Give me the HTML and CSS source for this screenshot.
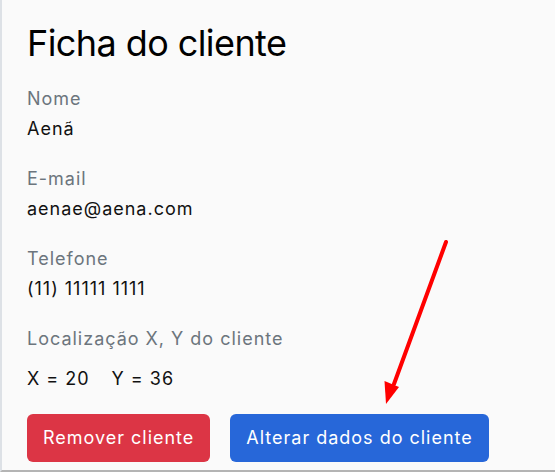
FILE: index.html
```html
<!DOCTYPE html>
<html lang="pt">
<head>
<meta charset="utf-8">
<title>Ficha do cliente</title>
<link rel="stylesheet" href="styles.css">
</head>
<body>
<main class="page">
  <h2 class="title">Ficha do cliente</h2>
  <div class="field">
    <div class="label">Nome</div>
    <div class="value">Aenã</div>
  </div>
  <div class="field">
    <div class="label">E-mail</div>
    <div class="value">aenae@aena.com</div>
  </div>
  <div class="field">
    <div class="label">Telefone</div>
    <div class="value">(11) 11111 1111</div>
  </div>
  <div class="field">
    <div class="label">Localização X, Y do cliente</div>
    <div class="value coords"><span>X = 20</span><span>Y = 36</span></div>
  </div>
  <div class="actions">
    <button class="btn btn-danger">Remover cliente</button>
    <button class="btn btn-primary">Alterar dados do cliente</button>
  </div>
  <svg class="arrow" width="555" height="472" viewBox="0 0 555 472" aria-hidden="true">
    <line x1="446" y1="242" x2="394" y2="384" stroke="#ff0000" stroke-width="4" stroke-linecap="round"/>
    <polygon points="386,404 384.5,381 399,387" fill="#ff0000"/>
  </svg>
</main>
</body>
</html>
```

FILE: styles.css
```css
* { box-sizing: border-box; }
html, body { margin: 0; padding: 0; }
body {
  font-family: Inter, "Noto Sans", sans-serif;
  font-size: 18px;
  letter-spacing: 0.055em;
  color: #111;
  background: #fafafa;
  width: 555px;
  height: 472px;
  overflow: hidden;
}
.page {
  position: relative;
  height: 472px;
  border-left: 2px solid #dde1e6;
  border-bottom: 2px solid #b4b4b4;
  padding: 22px 25px 0 25px;
}
.title {
  font-size: 36px;
  font-weight: 400;
  letter-spacing: -0.016em;
  line-height: 43px;
  margin: 0 0 19px 0;
  color: #000;
}
.field { margin-bottom: 20px; }
.label {
  color: #6c757d;
  line-height: 30px;
}
.value {
  line-height: 30px;
  color: #111;
}
.coords {
  margin-top: 10px;
  display: flex;
  gap: 22px;
}
.actions {
  display: flex;
  gap: 20px;
}
.btn {
  font-family: inherit;
  font-size: 18px;
  letter-spacing: inherit;
  line-height: 30px;
  padding: 9px 16px;
  border: none;
  border-radius: 6px;
  color: #fff;
}
.btn-danger { background: #dc3545; }
.btn-primary { background: #2767d9; }
.arrow {
  position: absolute;
  left: -2px;
  top: 0;
  pointer-events: none;
}
```
